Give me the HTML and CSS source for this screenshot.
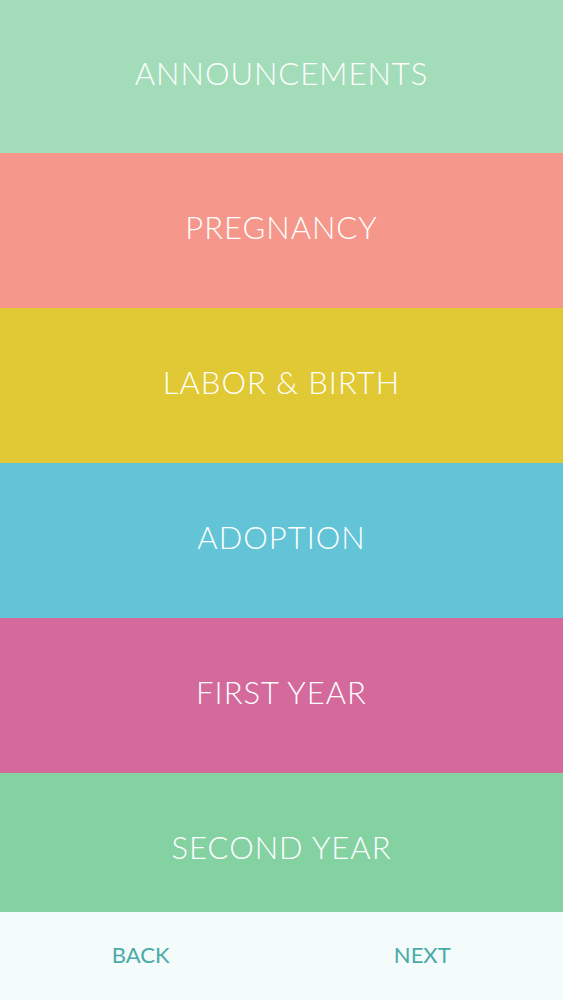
FILE: index.html
```html
<!DOCTYPE html>
<html lang="en">
<head>
<meta charset="utf-8">
<title>Categories</title>
<link rel="stylesheet" href="styles.css">
</head>
<body>
<div class="screen">
  <ul class="categories">
    <li class="cat cat-first cat-announcements">ANNOUNCEMENTS</li>
    <li class="cat cat-pregnancy">PREGNANCY</li>
    <li class="cat cat-labor">LABOR &amp; BIRTH</li>
    <li class="cat cat-adoption">ADOPTION</li>
    <li class="cat cat-firstyear">FIRST YEAR</li>
    <li class="cat cat-secondyear">SECOND YEAR</li>
  </ul>
  <nav class="footer">
    <span class="nav-btn">BACK</span>
    <span class="nav-btn">NEXT</span>
  </nav>
</div>
</body>
</html>
```
FILE: styles.css
```css
html, body {
  margin: 0;
  padding: 0;
}
body {
  font-family: "Lato", "Open Sans", "Liberation Sans", sans-serif;
  background: #f4fbfb;
}
.screen {
  width: 563px;
  height: 1000px;
  display: flex;
  flex-direction: column;
  overflow: hidden;
}
.categories {
  list-style: none;
  margin: 0;
  padding: 0;
  height: 912px;
  overflow: hidden;
  flex: none;
}
.cat {
  box-sizing: border-box;
  height: 155px;
  padding-bottom: 7px;
  display: flex;
  align-items: center;
  justify-content: center;
  color: #ffffff;
  font-size: 31px;
  font-weight: 300;
  letter-spacing: 1px;
}
.cat-first {
  height: 153px;
}
.cat-announcements { background: #a3dcb9; }
.cat-pregnancy { background: #f5978a; }
.cat-labor { background: #e0c935; }
.cat-adoption { background: #62c4d6; }
.cat-firstyear { background: #d4699b; }
.cat-secondyear { background: #84d1a2; }
.footer {
  flex: 1;
  display: grid;
  grid-template-columns: 1fr 1fr;
  align-items: center;
  background: #f4fbfb;
}
.nav-btn {
  text-align: center;
  color: #4aaaa8;
  font-size: 22px;
  font-weight: 400;
  padding-bottom: 4px;
}
```
